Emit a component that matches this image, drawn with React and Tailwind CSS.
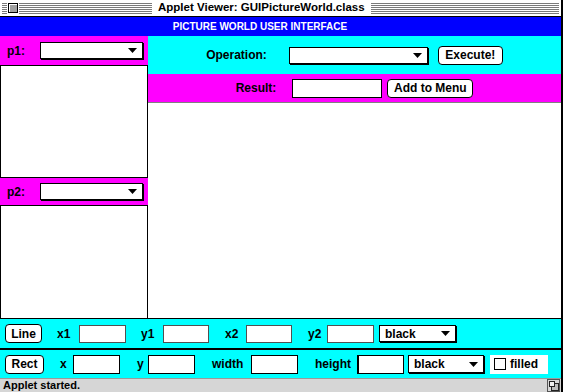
import React from "react";

const stripes =
  "bg-[repeating-linear-gradient(to_bottom,#7a7a7a_0px,#7a7a7a_1px,#ffffff_1px,#ffffff_2px)]";

function Select({ className, text }) {
  return (
    <div
      className={
        "flex items-center justify-between bg-white border border-black shadow-[1px_1px_0_#000] " +
        className
      }
    >
      <span className="pl-[5px] text-[12px] font-bold leading-none text-black">{text}</span>
      <svg width="9" height="5" viewBox="0 0 9 5" className="mr-[5px]">
        <path d="M0 0H9L4.5 5Z" fill="#000" />
      </svg>
    </div>
  );
}

function Button({ className, children }) {
  return (
    <div
      className={
        "flex items-center justify-center bg-white border border-black rounded-[4px] text-[12px] font-bold leading-none text-black " +
        className
      }
    >
      {children}
    </div>
  );
}

function Field({ className }) {
  return <div className={"bg-white border " + className} />;
}

function Label({ className, children }) {
  return (
    <span className={"text-[12px] font-bold leading-none text-black shrink-0 " + className}>
      {children}
    </span>
  );
}

export default function App() {
  return (
    <div className="w-[564px] h-[392px] bg-white overflow-hidden font-['Liberation_Sans',Arial,sans-serif]">
      <div className="w-[563px] h-[392px] border-r-2 border-black flex flex-col">
        {/* title bar */}
        <div className="h-[17px] shrink-0 border-b border-black bg-white flex items-center pl-[2px] pr-[2px]">
          <div className={"w-[150px] h-[11px] flex items-center " + stripes}>
            <div className="ml-[5px] h-[11px] bg-white px-[1px] flex items-center">
              <div className="w-[10px] h-[10px] border border-black bg-[#a0a0a0] shadow-[inset_1px_1px_0_#ffffff]" />
            </div>
          </div>
          <div className="px-[6px] bg-white text-[11.5px] font-bold leading-none text-black whitespace-nowrap">
            Applet Viewer: GUIPictureWorld.class
          </div>
          <div className={"flex-1 h-[11px] " + stripes} />
        </div>

        {/* heading */}
        <div className="h-[19px] shrink-0 bg-[#0000ff] flex items-center justify-center pr-[41px]">
          <span className="text-white text-[10px] font-bold leading-none">
            PICTURE WORLD USER INTERFACE
          </span>
        </div>

        {/* main */}
        <div className="h-[282px] shrink-0 flex">
          <div className="w-[148px] shrink-0 flex flex-col">
            <div className="h-[29px] shrink-0 bg-[#ff00ff] flex items-center pl-[7px]">
              <Label className="w-[33px] text-[11px]">p1:</Label>
              <Select className="w-[103px] h-[17px]" text="" />
            </div>
            <div className="h-[113px] shrink-0 bg-white border border-black" />
            <div className="h-[27px] shrink-0 bg-[#ff00ff] flex items-center pl-[7px]">
              <Label className="w-[33px] text-[11px]">p2:</Label>
              <Select className="w-[103px] h-[17px]" text="" />
            </div>
            <div className="flex-1 bg-white border-t border-l border-r border-black" />
          </div>

          <div className="flex-1 flex flex-col">
            <div className="h-[38px] shrink-0 bg-[#00ffff] flex items-center justify-center">
              <Label>Operation:</Label>
              <Select className="ml-[22px] w-[139px] h-[17px]" text="" />
              <Button className="ml-[10px] w-[65px] h-[19px]">Execute!</Button>
            </div>
            <div className="h-[29px] shrink-0 bg-[#ff00ff] border-b border-[#808080] flex items-center justify-center">
              <Label>Result:</Label>
              <Field className="ml-[16px] w-[90px] h-[19px] border-black" />
              <Button className="ml-[5px] w-[86px] h-[19px]">Add to Menu</Button>
            </div>
            <div className="flex-1 bg-white" />
          </div>
        </div>

        {/* line row */}
        <div className="h-[32px] shrink-0 bg-[#00ffff] border-t border-b-2 border-black flex items-center pl-[5px]">
          <Button className="w-[37px] h-[19px]">Line</Button>
          <Label className="w-[37px] pl-[15px]">x1</Label>
          <Field className="w-[47px] h-[18px] border-[#505050]" />
          <Label className="w-[37px] pl-[15px]">y1</Label>
          <Field className="w-[46px] h-[18px] border-[#505050]" />
          <Label className="w-[37px] pl-[16px]">x2</Label>
          <Field className="w-[46px] h-[18px] border-[#505050]" />
          <Label className="w-[35px] pl-[16px]">y2</Label>
          <Field className="w-[47px] h-[18px] border-[#505050]" />
          <Select className="ml-[5px] w-[77px] h-[17px]" text="black" />
        </div>

        {/* rect row */}
        <div className="h-[28px] shrink-0 bg-[#00ffff] flex items-center pl-[5px]">
          <Button className="w-[39px] h-[19px]">Rect</Button>
          <Label className="w-[29px] pl-[16px]">x</Label>
          <Field className="w-[47px] h-[19px] border-black" />
          <Label className="w-[28px] pl-[17px]">y</Label>
          <Field className="w-[47px] h-[19px] border-black" />
          <Label className="w-[56px] pl-[17px]">width</Label>
          <Field className="w-[47px] h-[19px] border-black" />
          <Label className="w-[59px] pl-[17px]">height</Label>
          <Field className="w-[47px] h-[19px] border-black border-l-2" />
          <Select className="ml-[4px] w-[76px] h-[18px]" text="black" />
          <div className="ml-[6px] w-[58px] h-[19px] bg-white flex items-center pl-[4px]">
            <div className="w-[12px] h-[12px] border border-black bg-white" />
            <span className="ml-[4px] text-[12px] font-bold leading-none text-black">filled</span>
          </div>
        </div>

        {/* status bar */}
        <div className="flex-1 bg-[#d6d6d6] border-t border-[#9a9a9a] flex items-center justify-between pl-[3px]">
          <span className="text-[11px] font-bold leading-none text-black">Applet started.</span>
          <svg width="13" height="13" viewBox="0 0 13 13" className="mr-[1px]">
            <rect x="0.5" y="0.5" width="12" height="12" fill="#d6d6d6" stroke="#555" />
            <rect x="4.5" y="4.5" width="7" height="7" fill="#bbb" stroke="#222" />
            <rect x="2.5" y="2.5" width="5" height="5" fill="#eee" stroke="#222" />
          </svg>
        </div>
      </div>
    </div>
  );
}
